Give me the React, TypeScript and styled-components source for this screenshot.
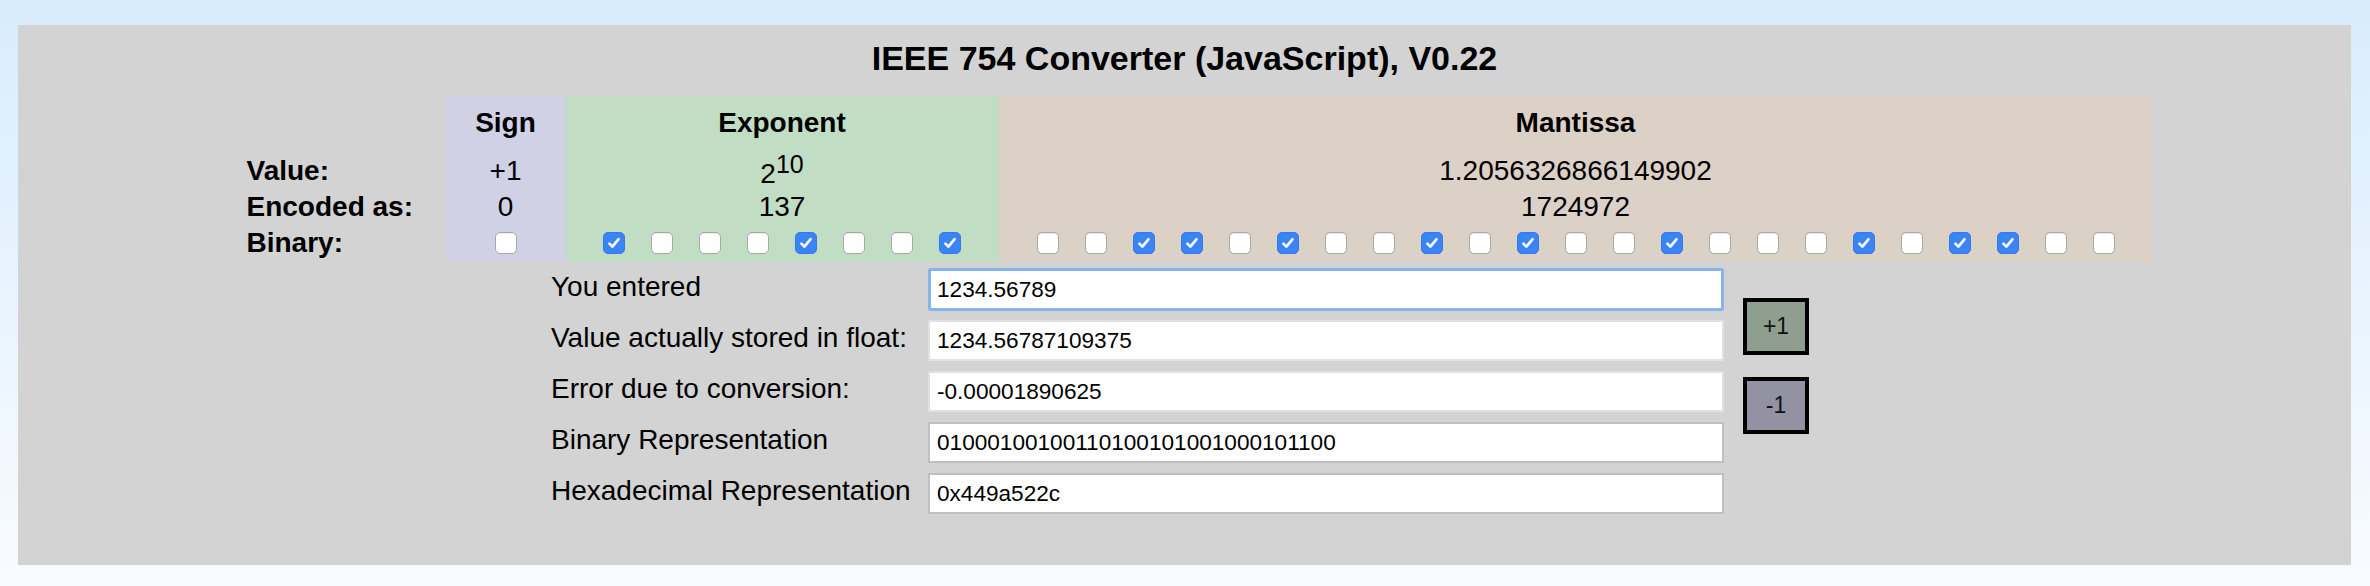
import React from "react";
import styled, { createGlobalStyle } from "styled-components";

const GlobalStyle = createGlobalStyle`
  html, body { margin: 0; padding: 0; }
  body {
    min-height: 100vh;
    background: linear-gradient(180deg, #d8ecfd 0%, #f8fbff 100%);
    font-family: "Liberation Sans", Arial, Helvetica, sans-serif;
    color: #000;
  }
`;

const Page = styled.div`
  padding: 25px 19px 21px 18px;
`;

const Panel = styled.main`
  background: #d3d3d3;
  padding: 14px 0 46px;
`;

const Title = styled.h1`
  margin: 0 0 17px;
  font-size: 34px;
  line-height: 39px;
  font-weight: bold;
  text-align: center;
`;

const BitsTable = styled.section`
  display: flex;
  width: max-content;
  margin: 0 auto;
`;

const Column = styled.div<{ $width: number; $bg?: string }>`
  display: grid;
  grid-template-rows: 57px 38px 34px 38px;
  width: ${(p) => p.$width}px;
  background: ${(p) => p.$bg ?? "transparent"};
`;

const RowLabel = styled.div`
  display: flex;
  align-items: center;
  padding-left: 30px;
  font-size: 28px;
  font-weight: bold;
  white-space: nowrap;
`;

const Header = styled.div`
  display: flex;
  align-items: center;
  justify-content: center;
  padding-bottom: 2px;
  font-size: 28px;
  font-weight: bold;
`;

const Cell = styled.div`
  display: flex;
  align-items: center;
  justify-content: center;
  font-size: 28px;
  white-space: nowrap;
`;

const Sup = styled.sup`
  font-size: 25px;
  line-height: 25px;
  vertical-align: 10px;
`;

const BitRow = styled.div`
  display: flex;
  align-items: center;
  justify-content: center;
  gap: 26px;
`;

const Bit = styled.span<{ $on: boolean }>`
  display: inline-flex;
  align-items: center;
  justify-content: center;
  width: 22px;
  height: 22px;
  box-sizing: border-box;
  border-radius: 5px;
  background: ${(p) => (p.$on ? "#3a84f6" : "#ffffff")};
  border: 1px solid ${(p) => (p.$on ? "#3579ea" : "#a8a8a8")};
  box-shadow: ${(p) =>
    p.$on ? "none" : "inset 0 1px 1px rgba(0,0,0,0.08)"};
`;

const Form = styled.section`
  display: grid;
  grid-template-columns: 377px 796px 85px;
  grid-auto-rows: 51px;
  width: max-content;
  margin: 2px auto 0;
  padding-right: 9px;
`;

const FieldLabel = styled.label`
  grid-column: 1;
  display: flex;
  align-items: center;
  padding-bottom: 5px;
  font-size: 28px;
  white-space: nowrap;
`;

type Variant = "focus" | "light" | "plain";

const borderFor: Record<Variant, string> = {
  focus: "3px solid #87b4ea",
  light: "2px solid #e1e1e1",
  plain: "2px solid #c0c0c0",
};

const Field = styled.input<{ $variant: Variant }>`
  grid-column: 2;
  align-self: center;
  width: 100%;
  height: ${(p) => (p.$variant === "focus" ? 43 : 41)}px;
  box-sizing: border-box;
  margin: 0;
  padding: 0 0 0 ${(p) => (p.$variant === "focus" ? 6 : 7)}px;
  border: ${(p) => borderFor[p.$variant]};
  border-radius: ${(p) => (p.$variant === "focus" ? 3 : 0)}px;
  background: #ffffff;
  color: #000;
  font-family: "Liberation Sans", Arial, sans-serif;
  font-size: 22.6px;
  outline: none;
`;

const StepStack = styled.div`
  grid-column: 3;
  grid-row: 1 / span 5;
  display: flex;
  flex-direction: column;
  align-items: flex-start;
  gap: 22px;
  padding: 34px 0 0 19px;
`;

const StepButton = styled.button<{ $bg: string }>`
  width: 66px;
  height: 57px;
  box-sizing: border-box;
  padding: 0;
  border: 4px solid #000;
  border-radius: 0;
  background: ${(p) => p.$bg};
  color: #111;
  font-family: "Liberation Sans", Arial, sans-serif;
  font-size: 23px;
  cursor: pointer;
`;

const Check = () => (
  <svg width="16" height="16" viewBox="0 0 16 16" aria-hidden="true">
    <path
      d="M3.4 8.6 L6.4 11.6 L12.6 4.2"
      fill="none"
      stroke="#fff"
      strokeWidth="2.6"
      strokeLinecap="round"
      strokeLinejoin="round"
    />
  </svg>
);

const BITS = "01000100100110100101001000101100";

const Bits = ({ bits }: { bits: string }) => (
  <BitRow>
    {bits.split("").map((b, i) => (
      <Bit key={i} $on={b === "1"}>
        {b === "1" && <Check />}
      </Bit>
    ))}
  </BitRow>
);

const fields: { label: string; value: string; variant: Variant }[] = [
  { label: "You entered", value: "1234.56789", variant: "focus" },
  { label: "Value actually stored in float:", value: "1234.56787109375", variant: "light" },
  { label: "Error due to conversion:", value: "-0.00001890625", variant: "light" },
  { label: "Binary Representation", value: BITS, variant: "plain" },
  { label: "Hexadecimal Representation", value: "0x449a522c", variant: "plain" },
];

export default function App() {
  return (
    <>
      <GlobalStyle />
      <Page>
        <Panel>
          <Title>IEEE 754 Converter (JavaScript), V0.22</Title>
          <BitsTable>
            <Column $width={229}>
              <span />
              <RowLabel>Value:</RowLabel>
              <RowLabel>Encoded as:</RowLabel>
              <RowLabel>Binary:</RowLabel>
            </Column>
            <Column $width={120} $bg="#d1d1e5">
              <Header>Sign</Header>
              <Cell>+1</Cell>
              <Cell>0</Cell>
              <Bits bits={BITS.slice(0, 1)} />
            </Column>
            <Column $width={433} $bg="#c1ddc3">
              <Header>Exponent</Header>
              <Cell>
                <span>
                  2<Sup>10</Sup>
                </span>
              </Cell>
              <Cell>137</Cell>
              <Bits bits={BITS.slice(1, 9)} />
            </Column>
            <Column $width={1154} $bg="#dcd1c6">
              <Header>Mantissa</Header>
              <Cell>1.2056326866149902</Cell>
              <Cell>1724972</Cell>
              <Bits bits={BITS.slice(9)} />
            </Column>
          </BitsTable>
          <Form>
            <StepStack>
              <StepButton $bg="#8f9f8f">+1</StepButton>
              <StepButton $bg="#9392a2">-1</StepButton>
            </StepStack>
            {fields.map((f) => (
              <React.Fragment key={f.label}>
                <FieldLabel>{f.label}</FieldLabel>
                <Field $variant={f.variant} defaultValue={f.value} />
              </React.Fragment>
            ))}
          </Form>
        </Panel>
      </Page>
    </>
  );
}
